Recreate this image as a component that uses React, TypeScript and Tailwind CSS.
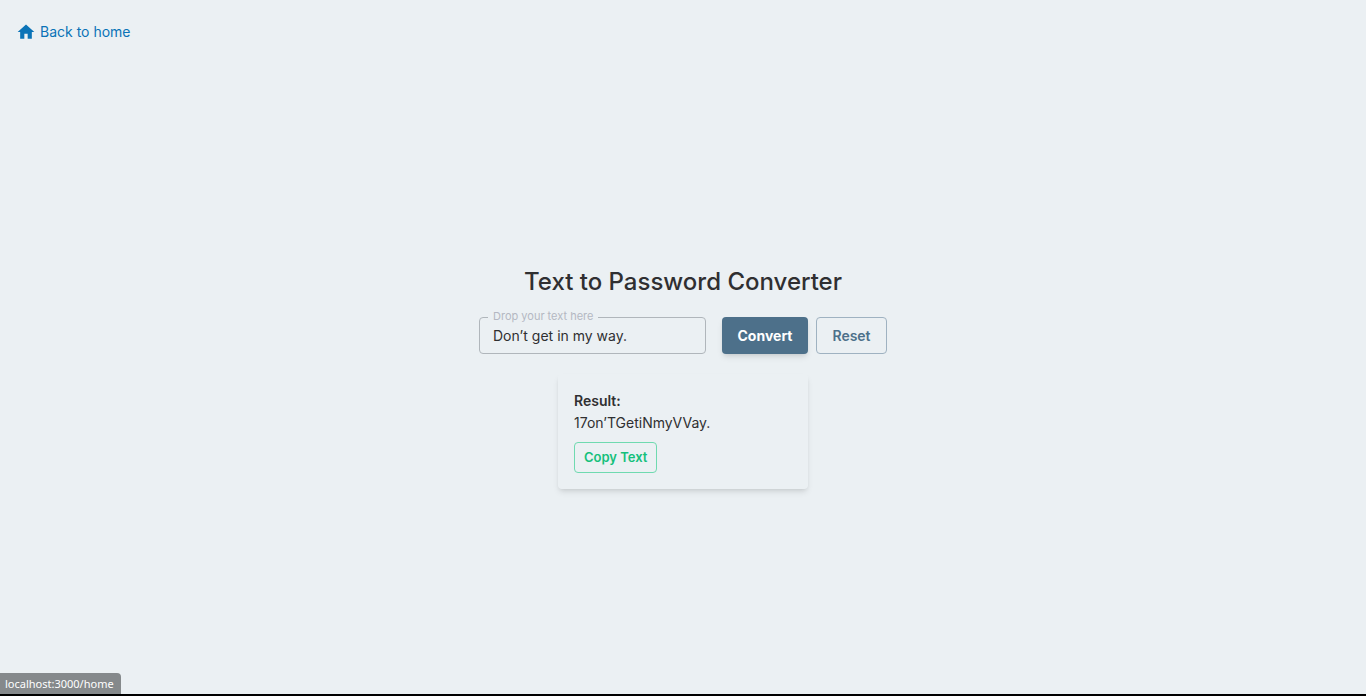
import { useState } from 'react';
import type { FormEvent } from 'react';

export default function App() {
  const [text, setText] = useState('Don’t get in my way.');
  const [result, setResult] = useState('17on’TGetiNmyVVay.');

  const convert = (event: FormEvent) => {
    event.preventDefault();
    setResult(
      text
        .split(' ')
        .map((word) => word.charAt(0).toUpperCase() + word.slice(1))
        .join('')
        .replace(/D/g, '17')
        .replace(/w/gi, 'VV'),
    );
  };

  const reset = () => {
    setText('');
    setResult('');
  };

  return (
    <div className="flex min-h-screen flex-col border-b-2 border-black bg-[#ebf0f3] font-['Inter',sans-serif] text-[#2f2f31]">
      <header className="flex h-16 items-center px-4">
        <a href="/home" className="flex items-center gap-1 text-sm leading-6 text-[#0a73b7]">
          <svg viewBox="0 0 24 24" className="size-5 fill-current" aria-hidden="true">
            <path d="M10 20v-6h4v6h5v-8h3L12 3 2 12h3v8z" />
          </svg>
          Back to home
        </a>
      </header>

      <main className="flex flex-1 flex-col items-center justify-center pb-[3px]">
        <h1 className="text-2xl leading-8 font-medium">Text to Password Converter</h1>

        <form onSubmit={convert} className="mt-[13px] flex items-end gap-2">
          <fieldset className="mr-2 h-[43px] w-[227px] rounded border border-[#b0b6bb] px-2">
            <legend className="h-3 px-[5px] text-[11px] leading-[10px] text-[#b4b8c2]">
              <label htmlFor="source">Drop your text here</label>
            </legend>
            <input
              id="source"
              value={text}
              onChange={(event) => setText(event.target.value)}
              className="block h-6 w-full bg-transparent px-[5px] text-sm outline-none"
            />
          </fieldset>
          <button
            type="submit"
            className="h-[37px] w-[86px] rounded bg-[#4d708a] text-sm font-bold text-white shadow-md"
          >
            Convert
          </button>
          <button
            type="button"
            onClick={reset}
            className="h-[37px] w-[71px] rounded border border-[#9fb2c1] text-sm font-semibold text-[#4d708a]"
          >
            Reset
          </button>
        </form>

        <section className="mt-5 w-[250px] rounded p-4 shadow-md">
          <h2 className="text-sm leading-[22px] font-semibold">Result:</h2>
          <p className="text-sm leading-[22px]">{result}</p>
          <button
            type="button"
            onClick={() => navigator.clipboard.writeText(result)}
            className="mt-2 block h-[31px] rounded border border-[#6fdab0] px-[9px] text-[13px] font-semibold text-[#15c07c]"
          >
            Copy Text
          </button>
        </section>
      </main>

      <div className="fixed bottom-0.5 left-0 rounded-tr bg-[#85898b] pr-[7px] pl-[5px] font-['Noto_Sans',sans-serif] text-[11px] leading-[21px] text-white">
        localhost:3000/home
      </div>
    </div>
  );
}
